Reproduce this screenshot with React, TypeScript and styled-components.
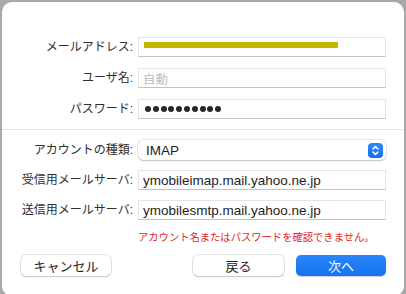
import styled, { createGlobalStyle } from "styled-components";

const GlobalStyle = createGlobalStyle`
  html, body {
    margin: 0;
    padding: 0;
    width: 406px;
    height: 294px;
    overflow: hidden;
    background: #a9a9a9;
  }
  * {
    box-sizing: border-box;
  }
`;

const FONT = `"Liberation Sans", "Noto Sans CJK JP", sans-serif`;

const Sheet = styled.div`
  margin: 2px 2px 0 2px;
  width: 402px;
  height: 294px;
  border-radius: 10px;
  background: #ffffff;
  padding-top: 35px;
  font-family: ${FONT};
  color: #262626;
`;

const FormGrid = styled.div<{ gap: number }>`
  display: grid;
  grid-template-columns: 131px 248px;
  column-gap: 5px;
  row-gap: ${({ gap }) => gap}px;
  align-items: center;
`;

const Label = styled.label`
  text-align: right;
  font-size: 12px;
  line-height: 20px;
  color: #2e2e2e;
  white-space: nowrap;
`;

const Field = styled.div<{ muted?: boolean }>`
  position: relative;
  height: 20px;
  background: #fff;
  border: 1px solid #e4e4e4;
  border-bottom-color: #c2c2c2;
  padding: 0 4px;
  display: flex;
  align-items: center;
  font-size: ${({ muted }) => (muted ? "12.5px" : "13.5px")};
  color: ${({ muted }) => (muted ? "#bdbdbd" : "#1e1e1e")};
  white-space: nowrap;
  overflow: hidden;
`;

const Redacted = styled.span`
  display: block;
  margin-left: 1px;
  width: 194px;
  height: 6px;
  background: #c3b500;
  margin-top: -4px;
`;

const Dots = styled.div`
  display: flex;
  gap: 1.8px;
  padding-left: 2px;
`;

const Dot = styled.span`
  width: 6px;
  height: 6px;
  border-radius: 50%;
  background: #262626;
`;

const Separator = styled.hr`
  border: none;
  height: 1px;
  background: #e2e2e2;
  margin: 10px 0 10px 0;
`;

const Select = styled.div`
  height: 20px;
  border-radius: 5px;
  background: #fff;
  box-shadow: 0 0 0 0.5px rgba(0, 0, 0, 0.18), 0 1px 1.5px rgba(0, 0, 0, 0.15);
  display: flex;
  align-items: center;
  justify-content: space-between;
  padding: 0 3px 0 8px;
  font-size: 13.5px;
  color: #1e1e1e;
`;

const Stepper = styled.span`
  width: 15px;
  height: 15px;
  border-radius: 4px;
  background: linear-gradient(#2b8af8, #1672ee);
  display: flex;
  align-items: center;
  justify-content: center;
`;

const ErrorText = styled.p`
  margin: 12px 0 0 136px;
  font-size: 10.3px;
  line-height: 12px;
  color: #e2261c;
  font-family: ${FONT};
`;

const ButtonRow = styled.div`
  display: flex;
  align-items: center;
  gap: 12px;
  margin-top: 11px;
  padding: 0 18px 0 19px;
`;

const Button = styled.button<{ primary?: boolean; width: number; push?: boolean }>`
  width: ${({ width }) => width}px;
  height: 21px;
  margin-right: ${({ push }) => (push ? "auto" : "0")};
  border: none;
  border-radius: 5px;
  font-family: ${FONT};
  font-size: 13px;
  padding: 0;
  color: ${({ primary }) => (primary ? "#ffffff" : "#262626")};
  background: ${({ primary }) =>
    primary ? "linear-gradient(#2a86f8, #1672ef)" : "#ffffff"};
  box-shadow: ${({ primary }) =>
    primary
      ? "0 0.5px 1px rgba(0, 0, 0, 0.2)"
      : "0 0 0 0.5px rgba(0, 0, 0, 0.2), 0 1px 1.5px rgba(0, 0, 0, 0.15)"};
`;

const StepperIcon = () => (
  <svg width="9" height="11" viewBox="0 0 9 11" fill="none">
    <path
      d="M2 4 L4.5 1.6 L7 4 M2 7 L4.5 9.4 L7 7"
      stroke="#fff"
      strokeWidth="1.5"
      strokeLinecap="round"
      strokeLinejoin="round"
    />
  </svg>
);

export default function App() {
  return (
    <>
      <GlobalStyle />
      <Sheet>
        <FormGrid gap={11}>
          <Label>メールアドレス:</Label>
          <Field>
            <Redacted />
          </Field>
          <Label>ユーザ名:</Label>
          <Field muted>自動</Field>
          <Label>パスワード:</Label>
          <Field>
            <Dots>
              {Array.from({ length: 10 }).map((_, i) => (
                <Dot key={i} />
              ))}
            </Dots>
          </Field>
        </FormGrid>

        <Separator />

        <FormGrid gap={10}>
          <Label>アカウントの種類:</Label>
          <Select>
            IMAP
            <Stepper>
              <StepperIcon />
            </Stepper>
          </Select>
          <Label>受信用メールサーバ:</Label>
          <Field>ymobileimap.mail.yahoo.ne.jp</Field>
          <Label>送信用メールサーバ:</Label>
          <Field>ymobilesmtp.mail.yahoo.ne.jp</Field>
        </FormGrid>

        <ErrorText>アカウント名またはパスワードを確認できません。</ErrorText>

        <ButtonRow>
          <Button width={90} push>
            キャンセル
          </Button>
          <Button width={91}>戻る</Button>
          <Button width={90} primary>
            次へ
          </Button>
        </ButtonRow>
      </Sheet>
    </>
  );
}
